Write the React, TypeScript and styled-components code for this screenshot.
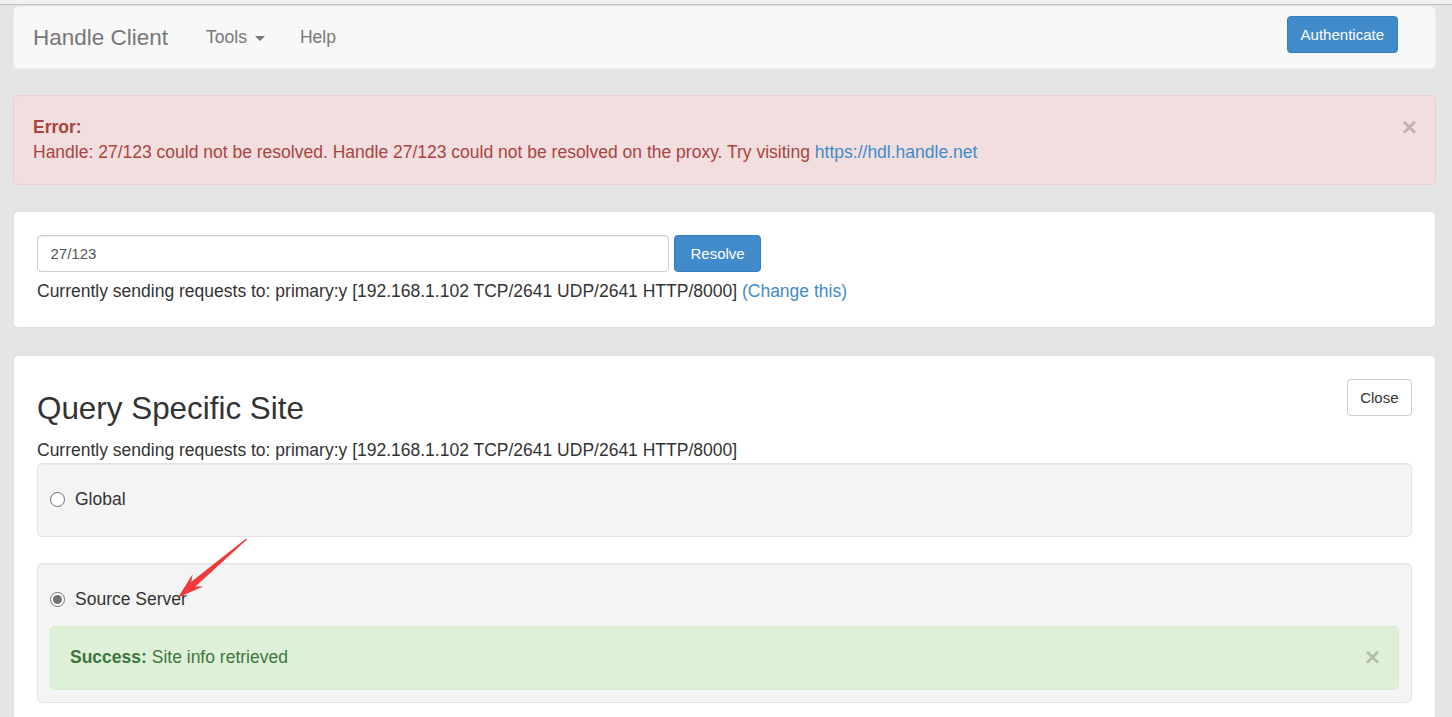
import React from "react";
import styled, { createGlobalStyle } from "styled-components";

const GlobalStyle = createGlobalStyle`
  html, body {
    margin: 0;
    padding: 0;
    background: #e5e5e5;
  }
  body {
    font-family: "Liberation Sans", Arial, Helvetica, sans-serif;
    font-size: 17.5px;
    line-height: 25px;
    color: #333;
  }
  * { box-sizing: border-box; }
`;

const Page = styled.div`
  position: relative;
  min-height: 717px;
  overflow: hidden;
`;

const TopStrip = styled.div`
  height: 5px;
  background: #f1f1f1;
  border-bottom: 1px solid #bdbdbd;
`;

const Container = styled.div`
  padding: 1px 16px 0 13px;
`;

const Navbar = styled.nav`
  display: flex;
  align-items: center;
  height: 63px;
  padding: 0 37px 0 19px;
  background: #f8f8f8;
  border: 1px solid #ececec;
  border-radius: 5px;
  margin-bottom: 26px;
`;

const Brand = styled.a`
  font-size: 22.5px;
  color: #777;
  text-decoration: none;
  margin-right: 38px;
`;

const NavLink = styled.a<{ $gap?: number }>`
  display: inline-flex;
  align-items: center;
  font-size: 17.5px;
  color: #777;
  text-decoration: none;
  margin-right: ${(p) => p.$gap ?? 0}px;
`;

const Caret = styled.span`
  display: inline-block;
  width: 0;
  height: 0;
  margin-left: 8px;
  margin-top: 2px;
  border-top: 5px solid #777;
  border-left: 5px solid transparent;
  border-right: 5px solid transparent;
`;

const Button = styled.button<{ $variant: "primary" | "default"; $pad?: number }>`
  height: 37px;
  padding: 0 ${(p) => p.$pad ?? 12.5}px;
  font-family: inherit;
  font-size: 15px;
  line-height: 1;
  border-radius: 3.75px;
  cursor: pointer;
  background: ${(p) => (p.$variant === "primary" ? "#428bca" : "#fff")};
  color: ${(p) => (p.$variant === "primary" ? "#fff" : "#333")};
  border: 1px solid ${(p) => (p.$variant === "primary" ? "#357ebd" : "#ccc")};
  flex-shrink: 0;
`;

const NavButton = styled(Button)`
  margin-left: auto;
  align-self: flex-start;
  margin-top: 9px;
`;

const Alert = styled.div<{ $variant: "danger" | "success" }>`
  display: flex;
  align-items: flex-start;
  padding: ${(p) => (p.$variant === "danger" ? "18.75px 18px 18.75px 19px" : "18.5px 18px 18.5px 19px")};
  border-radius: 5px;
  background: ${(p) => (p.$variant === "danger" ? "#f2dede" : "#dff0d8")};
  border: 1px solid ${(p) => (p.$variant === "danger" ? "#ebccd1" : "#d6e9c6")};
  color: ${(p) => (p.$variant === "danger" ? "#a94442" : "#3c763d")};
  margin-bottom: ${(p) => (p.$variant === "danger" ? "26.5px" : "0")};
  margin-top: ${(p) => (p.$variant === "success" ? "2px" : "0")};
`;

const AlertText = styled.div`
  flex: 1;
`;

const CloseX = styled.span`
  font-size: 26px;
  line-height: 25px;
  font-weight: 700;
  color: #000;
  opacity: 0.2;
  text-shadow: 0 1px 0 #fff;
  cursor: pointer;
`;

const Link = styled.a`
  color: #428bca;
  text-decoration: none;
`;

const Panel = styled.section`
  background: #fff;
  border: 1px solid #e0e0e0;
  border-radius: 5px;
  padding: 23px;
  margin-bottom: 27px;
`;

const InputRow = styled.div`
  display: flex;
  gap: 5px;
`;

const TextInput = styled.input`
  width: 632px;
  height: 37px;
  padding: 0 12.5px;
  font-family: inherit;
  font-size: 15px;
  color: #555;
  border: 1px solid #ccc;
  border-radius: 3.75px;
  box-shadow: inset 0 1px 1px rgba(0, 0, 0, 0.075);
  outline: none;
`;

const Line = styled.p<{ $top?: number; $bottom?: number }>`
  margin: ${(p) => p.$top ?? 0}px 0 ${(p) => p.$bottom ?? 0}px;
`;

const HeaderRow = styled.div`
  display: flex;
  justify-content: space-between;
  align-items: flex-start;
`;

const Heading = styled.h3`
  margin: 13px 0 12px;
  font-size: 31.4px;
  line-height: 34px;
  font-weight: 400;
  color: #333;
`;

const Well = styled.div<{ $gap?: number }>`
  background: #f4f4f4;
  border: 1px solid #e3e3e3;
  border-radius: 5px;
  padding: 12px;
  box-shadow: inset 0 1px 1px rgba(0, 0, 0, 0.05);
  margin-top: ${(p) => p.$gap ?? 0}px;
`;

const RadioRow = styled.label`
  display: flex;
  align-items: center;
  gap: 10px;
  height: 48px;
  cursor: pointer;
`;

const Radio = styled.span<{ $checked?: boolean }>`
  display: inline-flex;
  align-items: center;
  justify-content: center;
  width: 15px;
  height: 15px;
  border-radius: 50%;
  border: 1px solid #6f6f6f;
  background: #fff;
  &::after {
    content: "";
    display: ${(p) => (p.$checked ? "block" : "none")};
    width: 9px;
    height: 9px;
    border-radius: 50%;
    background: #737373;
  }
`;

const Overlay = styled.svg`
  position: absolute;
  left: 0;
  top: 0;
  pointer-events: none;
`;

export default function App() {
  return (
    <Page>
      <GlobalStyle />
      <TopStrip />
      <Container>
        <Navbar>
          <Brand>Handle Client</Brand>
          <NavLink $gap={35}>
            Tools
            <Caret />
          </NavLink>
          <NavLink>Help</NavLink>
          <NavButton $variant="primary" $pad={13}>
            Authenticate
          </NavButton>
        </Navbar>

        <Alert $variant="danger">
          <AlertText>
            <strong>Error:</strong>
            <br />
            Handle: 27/123 could not be resolved. Handle 27/123 could not be resolved on the proxy. Try visiting{" "}
            <Link>https://hdl.handle.net</Link>
          </AlertText>
          <CloseX>×</CloseX>
        </Alert>

        <Panel>
          <InputRow>
            <TextInput defaultValue="27/123" />
            <Button $variant="primary" $pad={15.5}>
              Resolve
            </Button>
          </InputRow>
          <Line $top={6.5}>
            Currently sending requests to: primary:y [192.168.1.102 TCP/2641 UDP/2641 HTTP/8000]{" "}
            <Link>(Change this)</Link>
          </Line>
        </Panel>

        <Panel>
          <HeaderRow>
            <Heading>Query Specific Site</Heading>
            <Button $variant="default">Close</Button>
          </HeaderRow>
          <Line>
            Currently sending requests to: primary:y [192.168.1.102 TCP/2641 UDP/2641 HTTP/8000]
          </Line>
          <Well>
            <RadioRow>
              <Radio />
              Global
            </RadioRow>
          </Well>
          <Well $gap={26}>
            <RadioRow>
              <Radio $checked />
              Source Server
            </RadioRow>
            <Alert $variant="success">
              <AlertText>
                <strong>Success:</strong> Site info retrieved
              </AlertText>
              <CloseX>×</CloseX>
            </Alert>
          </Well>
        </Panel>
      </Container>

      <Overlay width="1452" height="717" viewBox="0 0 1452 717">
        <polygon
          points="247,539.6 195.4,586.4 203.2,586.6 178,597.5 192.6,574.2 191.3,581.8 246.2,538.6"
          fill="#f0393b"
        />
      </Overlay>
    </Page>
  );
}
